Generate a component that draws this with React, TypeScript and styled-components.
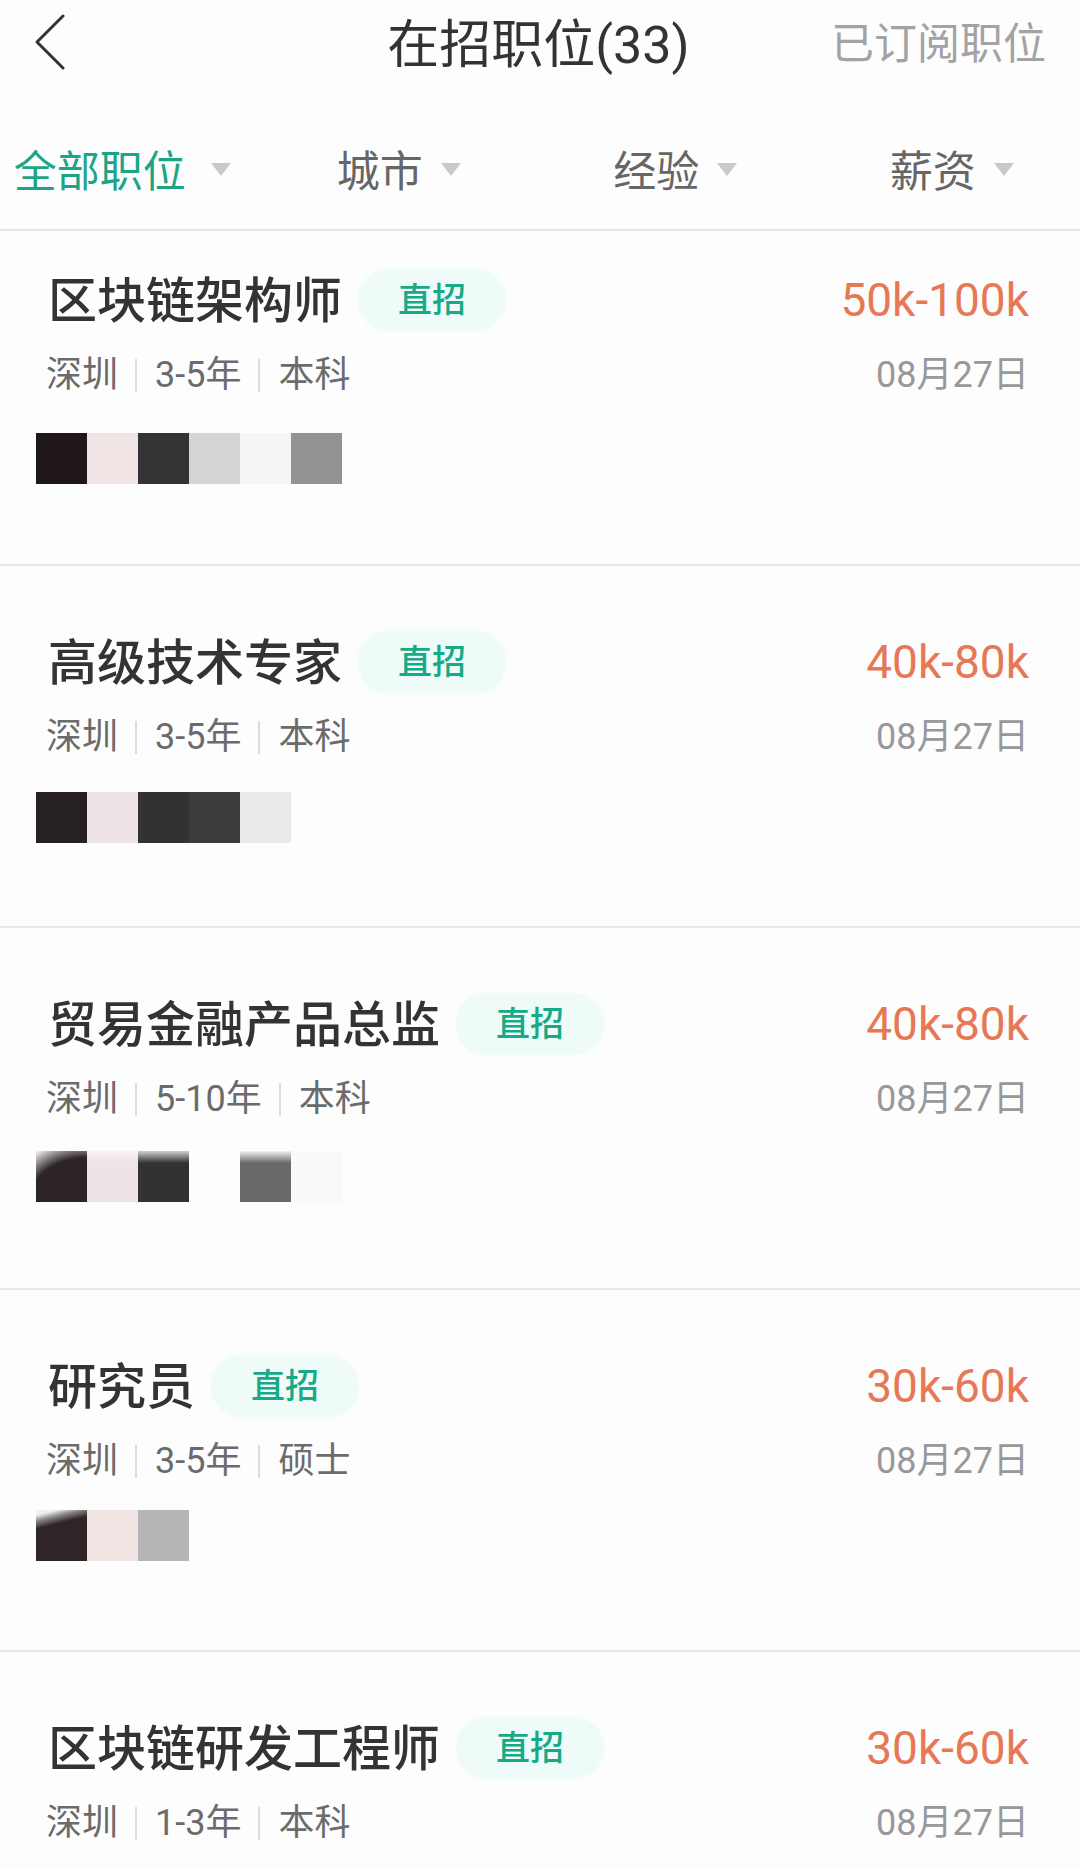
import React from "react";
import styled, { createGlobalStyle } from "styled-components";

const GlobalStyle = createGlobalStyle`
  * { box-sizing: border-box; }
  body {
    margin: 0;
    background: #fdfdfe;
    color: #333;
    font-family: Roboto, "Noto Sans CJK SC", sans-serif;
    overflow-x: hidden;
  }
  h1, h2, p, ul { margin: 0; padding: 0; }
  button, select { font: inherit; border: 0; padding: 0; background: none; cursor: pointer; }
`;

const Header = styled.header`
  display: grid;
  grid-template-columns: 1fr auto 1fr;
  align-items: center;
  height: 88px;
  padding: 0 34px 0 31px;
`;

const BackButton = styled.button`
  justify-self: start;
  display: flex;
  padding-bottom: 5px;
`;

const PageTitle = styled.h1`
  padding-top: 4px;
  font-size: 52px;
  line-height: 64px;
  font-weight: 400;
`;

const Subscribed = styled.a`
  justify-self: end;
  font-size: 43px;
  line-height: 64px;
  color: #a3a3a3;
  text-decoration: none;
`;

const Filters = styled.nav`
  display: grid;
  grid-template-columns: repeat(4, 1fr);
  height: 143px;
  margin: 0 -10px 0 -16px;
  padding-top: 22px;
  border-bottom: 2px solid #e5e6e9;
`;

const Filter = styled.label<{ $active?: boolean }>`
  display: flex;
  align-items: center;
  justify-content: center;
  gap: ${(p) => (p.$active ? 25 : 18)}px;
  color: ${(p) => (p.$active ? "#1ca585" : "#666")};
`;

const FilterSelect = styled.select`
  appearance: none;
  padding-top: 5px;
  color: inherit;
  font-size: 43px;
  line-height: 64px;
  outline: none;
`;

const Job = styled.li`
  list-style: none;
  height: 362px;
  padding: 62px 51px 0 46px;
  border-bottom: 2px solid #e8e8eb;

  &:first-child {
    height: 335px;
    padding-top: 35px;
  }

  &:last-child {
    height: auto;
    padding-bottom: 4px;
    border-bottom: 0;
  }
`;

const Line = styled.div`
  display: flex;
  align-items: center;
  justify-content: space-between;
`;

const Heading = styled.div`
  display: flex;
  align-items: center;
  gap: 16px;
`;

const JobTitle = styled.h2`
  padding: 4px 0 0 2px;
  font-size: 49px;
  line-height: 64px;
  font-weight: 500;
`;

const Badge = styled.span`
  padding: 0 40px;
  border-radius: 31px;
  background: #effbf8;
  box-shadow: 0 0 6px #f3fcfa;
  color: #17aa86;
  font-size: 34px;
  line-height: 62px;
  font-weight: 500;
`;

const Salary = styled.p`
  font-size: 46px;
  line-height: 64px;
  color: #e77855;
`;

const Meta = styled.div`
  display: flex;
  align-items: center;
  color: #6b6b6b;
  font-size: 36px;
  line-height: 82px;
`;

const Fact = styled.span`
  & + & {
    display: flex;
    align-items: center;
  }

  & + &::before {
    content: "";
    width: 2px;
    height: 33px;
    margin: 0 18px 0 17px;
    background: #dcdcdc;
  }
`;

const PostedOn = styled.time`
  color: #98989b;
  font-size: 36px;
  line-height: 82px;
`;

const Mosaic = styled.div<{ $row: number }>`
  display: flex;
  margin: ${(p) => 17 - p.$row * 3}px 0 0 -10px;
`;

const Tile = styled.span<{ $fill: string }>`
  width: 51px;
  height: 51px;
  background: ${(p) => p.$fill};
`;

const filters = ["全部职位", "城市", "经验", "薪资"];

const jobs = [
  {
    title: "区块链架构师",
    facts: ["深圳", "3-5年", "本科"],
    salary: "50k-100k",
    tiles: ["#1f1719", "#f1e4e4", "#333234", "#d5d4d6", "#f5f4f7", "#949294"],
  },
  {
    title: "高级技术专家",
    facts: ["深圳", "3-5年", "本科"],
    salary: "40k-80k",
    tiles: ["#272021", "#eee3e6", "#333132", "#3e3c3f", "#eae9ec"],
  },
  {
    title: "贸易金融产品总监",
    facts: ["深圳", "5-10年", "本科"],
    salary: "40k-80k",
    tiles: [
      "radial-gradient(ellipse 78px 60px at 100% 100%, #2d2426 74%, #777173 86%, #fdfdfe 108%)",
      "linear-gradient(#f8f3f5, #eee3e8 10px)",
      "linear-gradient(#d0d0d0, #333132 12px)",
      "transparent",
      "linear-gradient(#f2f2f2, #6a686a 12px)",
      "#faf8fa",
    ],
  },
  {
    title: "研究员",
    facts: ["深圳", "3-5年", "硕士"],
    salary: "30k-60k",
    tiles: [
      "linear-gradient(166deg, #f0f0f0 8%, #888484 18%, #2f2526 30%)",
      "#f1e4e2",
      "#b6b4b6",
    ],
  },
  {
    title: "区块链研发工程师",
    facts: ["深圳", "1-3年", "本科"],
    salary: "30k-60k",
    tiles: [],
  },
];

export default function App() {
  return (
    <>
      <GlobalStyle />
      <Header>
        <BackButton type="button" aria-label="返回">
          <svg width="34" height="56" viewBox="0 0 34 56" fill="none" stroke="#333" strokeWidth="3" strokeLinecap="round" strokeLinejoin="round">
            <path d="M32 2 6 28 32 54" />
          </svg>
        </BackButton>
        <PageTitle>在招职位(33)</PageTitle>
        <Subscribed href="#subscribed">已订阅职位</Subscribed>
      </Header>
      <Filters>
        {filters.map((name, i) => (
          <Filter key={name} $active={i === 0}>
            <FilterSelect aria-label={name}>
              <option>{name}</option>
            </FilterSelect>
            <svg width="20" height="13" viewBox="0 0 20 13" fill="#c9c9c9" aria-hidden="true">
              <path d="M0 0H20L10 13Z" />
            </svg>
          </Filter>
        ))}
      </Filters>
      <ul>
        {jobs.map((job, row) => (
          <Job key={job.title}>
            <Line>
              <Heading>
                <JobTitle>{job.title}</JobTitle>
                <Badge>直招</Badge>
              </Heading>
              <Salary>{job.salary}</Salary>
            </Line>
            <Line>
              <Meta>
                {job.facts.map((fact) => (
                  <Fact key={fact}>{fact}</Fact>
                ))}
              </Meta>
              <PostedOn dateTime="08-27">08月27日</PostedOn>
            </Line>
            {job.tiles.length > 0 && (
              <Mosaic $row={row}>
                {job.tiles.map((fill) => (
                  <Tile key={fill} $fill={fill} />
                ))}
              </Mosaic>
            )}
          </Job>
        ))}
      </ul>
    </>
  );
}
